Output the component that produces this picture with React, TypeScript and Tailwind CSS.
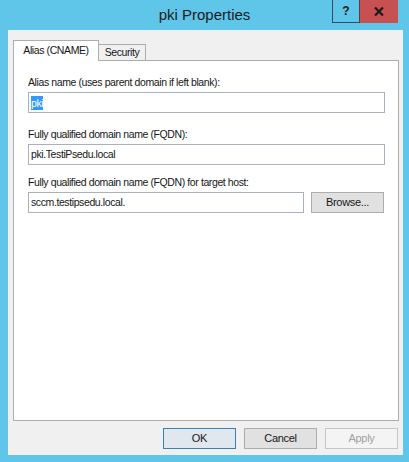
import React from "react";

const font = { fontFamily: '"Liberation Sans", Arial, sans-serif' };

const txt = "text-[10.5px] tracking-[-0.4px] text-[#161616]";

function Field({ label, value, selected, className }: { label: string; value: string; selected?: boolean; className?: string }) {
  return (
    <div className={className}>
      <div className={"h-[14px] leading-[14px] " + txt}>{label}</div>
      <div className={"mt-[3px] flex h-[21px] w-[357px] items-center border border-[#a9b1bc] bg-white px-[2px] " + txt}>
        {selected ? <span className="bg-[#3399ff] leading-[14px] text-white">{value}</span> : <span>{value}</span>}
      </div>
    </div>
  );
}

function DlgButton({ label, variant }: { label: string; variant?: "default" | "disabled" }) {
  const cls =
    variant === "default"
      ? "border-[#3c7fb1] bg-[#e1e7ee] text-[#161616]"
      : variant === "disabled"
      ? "border-[#c6c6c6] bg-[#f4f4f4] text-[#a0a0a0]"
      : "border-[#adadad] bg-[#e1e1e1] text-[#161616]";
  return (
    <div className={"flex h-[21px] w-[73px] items-center justify-center border text-[11px] tracking-[-0.3px] " + cls}>{label}</div>
  );
}

export default function App() {
  return (
    <div className="flex h-[462px] w-[409px] flex-col bg-[#5fc6e9]" style={font}>
      {/* title bar */}
      <div className="flex h-[30px] shrink-0">
        <div className="w-[77px]" />
        <div className="flex-1 pt-[5px] text-center text-[15px] leading-[20px] text-[#1b1b1b]">pki Properties</div>
        <div className="mr-[11px] flex h-[23px] w-[66px]">
          <div className="flex w-[28px] items-center justify-center border border-t-0 border-[#3d4a55] text-[12px] font-bold text-[#1b1b1b]">
            ?
          </div>
          <div className="flex flex-1 items-center justify-center bg-[#c75050]">
            <svg width="10" height="9" viewBox="0 0 10 9">
              <path d="M1 0.5 L9 8.5 M9 0.5 L1 8.5" stroke="#1b1b1b" strokeWidth="2.2" />
            </svg>
          </div>
        </div>
      </div>

      {/* body */}
      <div className="mb-[7px] ml-[8px] mr-[6px] flex flex-1 flex-col bg-[#f0f0f0] pl-[5px] pr-[4px] pt-[10px]">
        {/* tabs */}
        <div className="flex h-[20px] items-end">
          <div className={"relative z-10 -mb-px flex h-[21px] w-[86px] items-center justify-center border border-b-0 border-[#adadad] bg-white " + txt}>
            Alias (CNAME)
          </div>
          <div className={"flex h-[16px] w-[47px] items-center justify-center border border-l-0 border-b-0 border-[#adadad] bg-[#f0f0f0] " + txt}>
            Security
          </div>
        </div>
        {/* panel */}
        <div className="h-[361px] border border-[#adadad] bg-white pl-[14px] pt-[14px]">
          <Field label="Alias name (uses parent domain if left blank):" value="pki" selected />
          <Field className="mt-[14px]" label="Fully qualified domain name (FQDN):" value="pki.TestiPsedu.local" />
          <div className="mt-[10px]">
            <div className={"h-[14px] leading-[14px] " + txt}>Fully qualified domain name (FQDN) for target host:</div>
            <div className="mt-[3px] flex items-center">
              <div className={"flex h-[21px] w-[276px] items-center border border-[#a9b1bc] bg-white px-[2px] " + txt}>
                sccm.testipsedu.local.
              </div>
              <div className="ml-[7px] flex h-[21px] w-[73px] items-center justify-center border border-[#adadad] bg-[#e1e1e1] text-[11px] tracking-[-0.3px] text-[#161616]">
                Browse...
              </div>
            </div>
          </div>
        </div>
        {/* buttons */}
        <div className="mt-[7px] flex justify-end gap-[8px] pr-[1px]">
          <DlgButton label="OK" variant="default" />
          <DlgButton label="Cancel" />
          <DlgButton label="Apply" variant="disabled" />
        </div>
      </div>
    </div>
  );
}
